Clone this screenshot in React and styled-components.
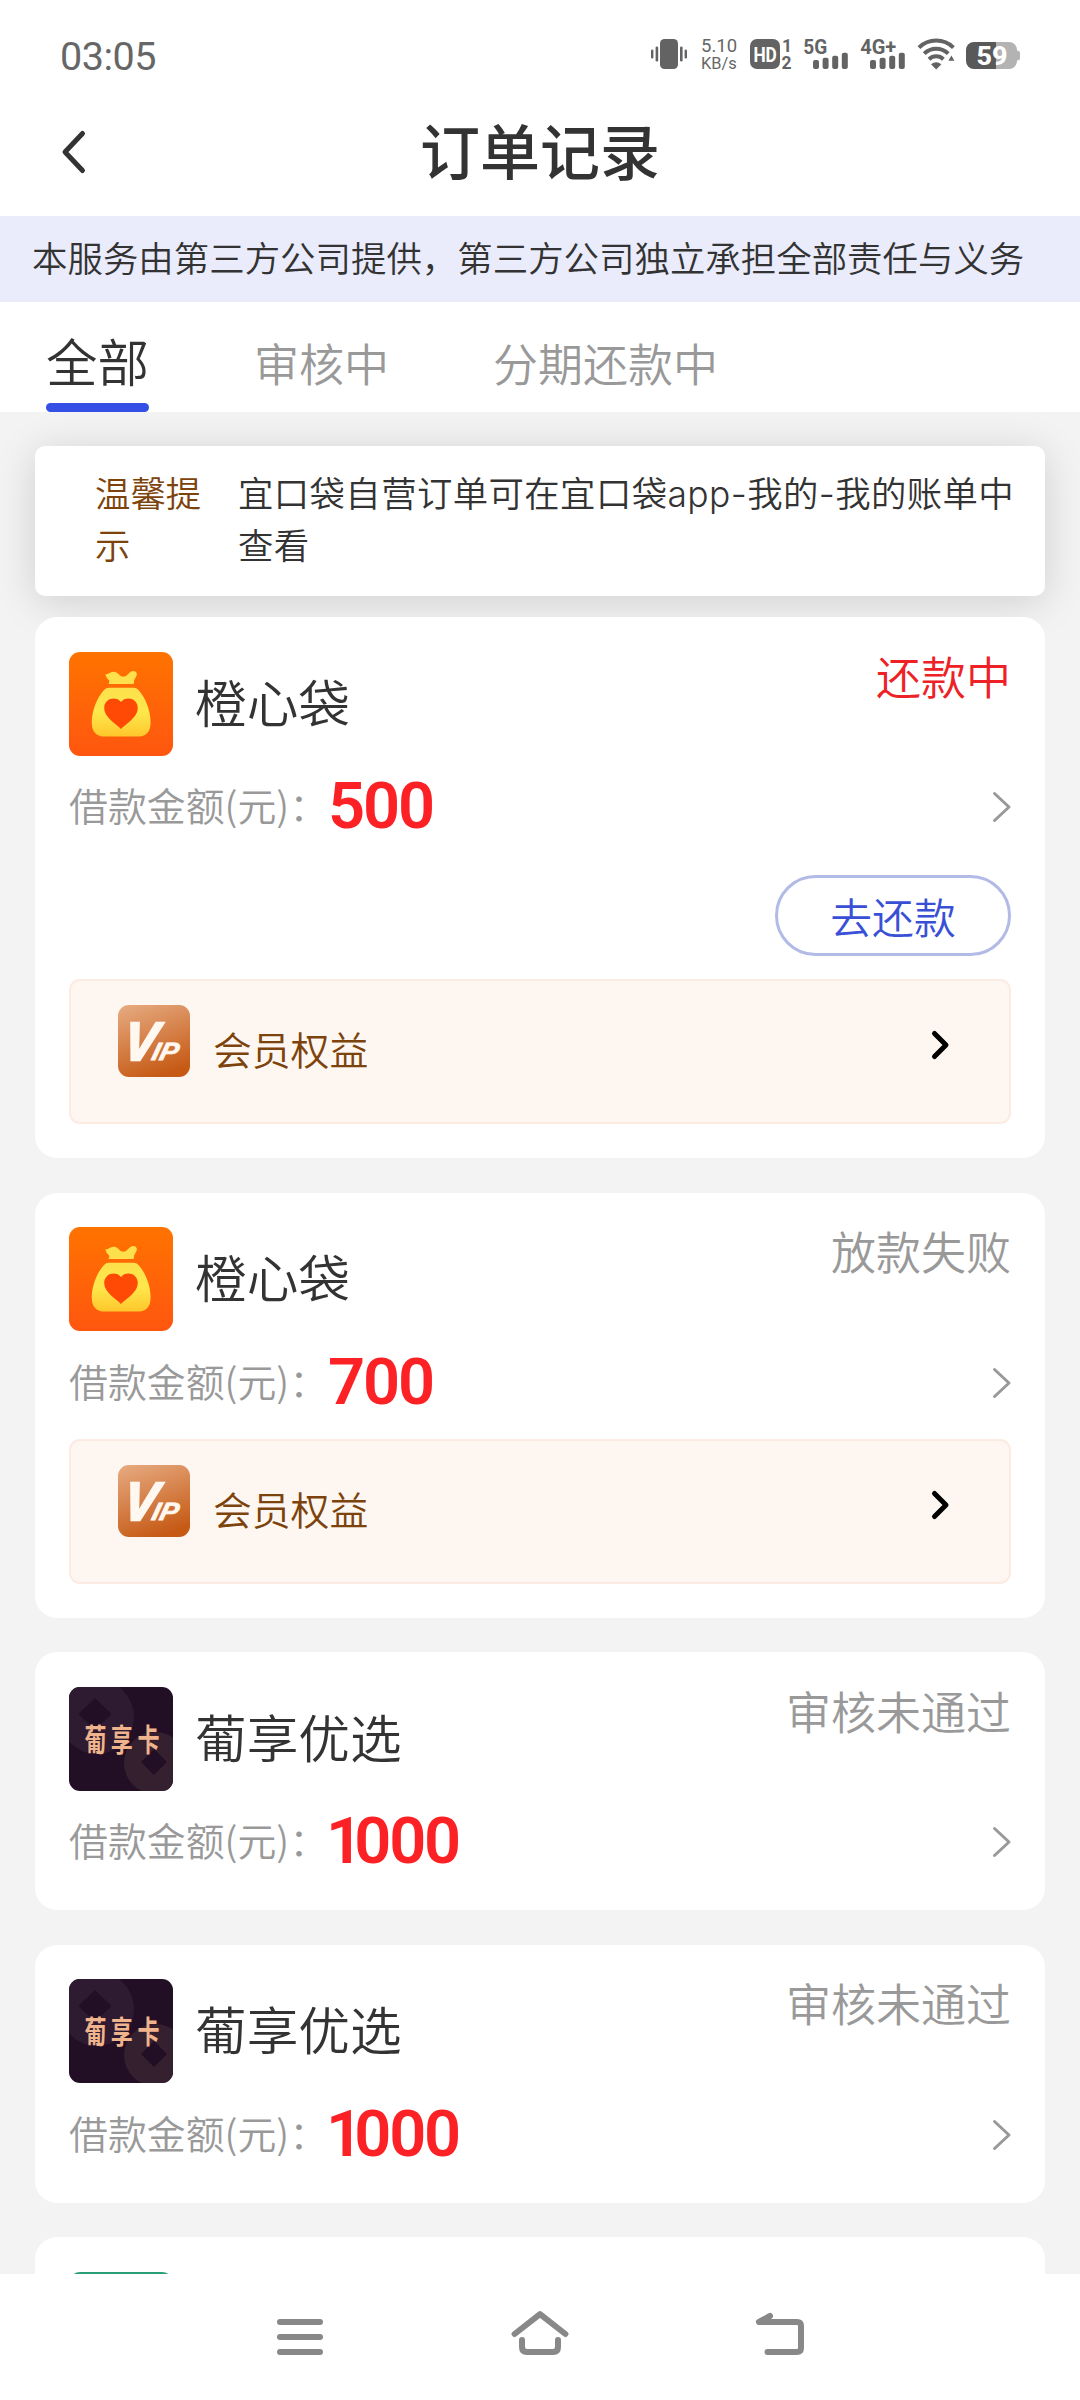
import React from "react";
import styled, { createGlobalStyle } from "styled-components";

const GlobalStyle = createGlobalStyle`
  body {
    margin: 0;
    background: #fff;
  }
  * {
    box-sizing: border-box;
  }
  svg {
    display: block;
    overflow: visible;
    flex: none;
  }
`;

const Screen = styled.div`
  width: 1080px;
  height: 2400px;
  display: flex;
  flex-direction: column;
  overflow: hidden;
  background: #fff;
  color: #333;
  font-family: "Noto Sans CJK SC", "Noto Sans", sans-serif;
  font-weight: 350;
`;

const StatusBar = styled.div`
  height: 88px;
  flex: none;
  display: flex;
  align-items: flex-start;
  justify-content: space-between;
  padding: 39px 60px 0 60px;
`;

const Clock = styled.div`
  font-family: Roboto, sans-serif;
  font-weight: 400;
  font-size: 39.5px;
  line-height: 36px;
  letter-spacing: -0.5px;
  color: #666;
`;

const StatusIcons = styled.div`
  display: flex;
  gap: 12px;
`;

const NetSpeed = styled.div`
  width: 37px;
  display: flex;
  flex-direction: column;
  font-family: Roboto, sans-serif;
  font-weight: 400;
  color: #666;
  white-space: nowrap;
`;

const SpeedValue = styled.span`
  font-size: ${(p) => p.$size}px;
  line-height: ${(p) => p.$line}px;
`;

const Header = styled.header`
  height: 128px;
  flex: none;
  display: grid;
  grid-template-columns: 120px 1fr 120px;
  align-items: center;
`;

const BackButton = styled.div`
  padding-left: 62px;
`;

const Title = styled.h1`
  margin: 0;
  text-align: center;
  font-size: 60px;
  line-height: 80px;
  padding-bottom: 7px;
  font-weight: 500;
`;

const Notice = styled.div`
  height: 86px;
  flex: none;
  padding-left: 32px;
  background: #eaecfb;
  font-size: 35.45px;
  line-height: 82px;
  white-space: nowrap;
`;

const Tabs = styled.nav`
  height: 110px;
  flex: none;
  display: flex;
  padding-left: 46px;
`;

const Tab = styled.div`
  display: flex;
  flex-direction: column;
  justify-content: space-between;
  margin-right: ${(p) => p.$after}px;
  font-size: ${(p) => (p.$active ? 51.5 : 45)}px;
  line-height: 101px;
  padding-top: ${(p) => (p.$active ? 7 : 10)}px;
  height: 110px;
  color: ${(p) => (p.$active ? "#333" : "#999")};
`;

const TabLabel = styled.span`
  height: 94px;
`;

const TabMarker = styled.span`
  height: 9px;
  border-radius: 4.5px;
  background: #344fe6;
`;

const Content = styled.main`
  flex: 1;
  min-height: 0;
  overflow: hidden;
  background: #f3f3f3;
  padding: 34px 35px 0;
`;

const TipCard = styled.section`
  height: 150px;
  display: flex;
  padding: 20px 20px 0 60px;
  margin-bottom: 21px;
  border-radius: 10px;
  background: #fff;
  box-shadow: 0 6px 42px rgba(0, 0, 0, 0.15);
  font-size: 35.4px;
  line-height: 52px;
`;

const TipLabel = styled.div`
  width: 143px;
  padding-right: 34px;
  flex: none;
  color: #7d430c;
`;

const TipText = styled.div`
  flex: 1;
  padding-top: 3px;
  font-family: Inter, "Noto Sans CJK SC", sans-serif;
  letter-spacing: 0.4px;
`;

const Card = styled.section`
  background: #fff;
  border-radius: 22px;
  padding: 34.6px 34px 34px 34px;
  margin-bottom: 34.6px;
`;

const CardHead = styled.div`
  height: 104px;
  display: flex;
`;

const AppName = styled.div`
  flex: 1;
  padding-left: 22px;
  font-size: 51.7px;
  line-height: 97.5px;
`;

const Status = styled.div`
  font-size: 45px;
  line-height: 48px;
  color: ${(p) => (p.$active ? "#ee2226" : "#999")};
`;

const AmountRow = styled.div`
  height: 68px;
  margin-top: 17.4px;
  display: flex;
  align-items: center;
`;

const AmountLabel = styled.span`
  font-size: 38.9px;
  line-height: 62px;
  padding-bottom: 6px;
  color: #999;
`;

const Amount = styled.span`
  flex: 1;
  font-family: Roboto, sans-serif;
  font-weight: 600;
  font-size: 65px;
  line-height: 66px;
  padding-bottom: 2px;
  letter-spacing: -2.2px;
  color: #fc2125;

  &::first-letter {
    margin-left: ${(p) => (p.$narrow ? -2 : 0)}px;
    letter-spacing: ${(p) => (p.$narrow ? -9 : -2.2)}px;
  }
`;

const Actions = styled.div`
  display: flex;
  justify-content: flex-end;
  margin-top: 34px;
`;

const RepayButton = styled.button`
  width: 236px;
  height: 81px;
  padding: 1px 0 0;
  border: 3px solid #b2bae6;
  border-radius: 41px;
  background: #fff;
  font: inherit;
  font-size: 41.8px;
  line-height: 74px;
  color: #3950d6;
`;

const VipRow = styled.div`
  height: 145px;
  margin-top: ${(p) => p.$top}px;
  display: flex;
  padding: 24px 60px 0 47px;
  border: 2px solid #fbebe3;
  border-radius: 11px;
  background: #fef7f1;
`;

const VipLabel = styled.span`
  flex: 1;
  padding-left: 23px;
  font-size: 38.8px;
  line-height: 86px;
  color: #7d430c;
`;

const VipArrow = styled.span`
  padding-top: 26px;
`;

const TealLogo = styled.div`
  width: 104px;
  height: 104px;
  border-radius: 11px;
  background: #2a9f75;
`;

const NavBar = styled.footer`
  height: 126px;
  flex: none;
  display: flex;
  justify-content: center;
  gap: 180px;
  padding-top: 36px;
  background: #fff;
`;

const G = "#636363";

function VibrateIcon() {
  return (
    <svg width="38" height="30" viewBox="0 0 38 30" fill={G}>
      <rect x="9" y="0" width="18" height="30" rx="4.5" />
      <rect x="4.6" y="7.5" width="2.6" height="15" rx="1.3" />
      <rect x="0" y="10.5" width="2.4" height="9" rx="1.2" />
      <rect x="29" y="7.5" width="2.6" height="15" rx="1.3" />
      <rect x="33.6" y="10.5" width="2.4" height="9" rx="1.2" />
    </svg>
  );
}

function HdIcon() {
  return (
    <svg width="42" height="30" viewBox="0 0 42 30" fontFamily="Roboto, sans-serif" fontWeight="700" fill={G}>
      <rect width="30" height="30" rx="7" />
      <text x="3.4" y="22.6" fontSize="21" fill="#fff" textLength="23.5" lengthAdjust="spacingAndGlyphs">
        HD
      </text>
      <text x="32" y="12.6" fontSize="17.5">1</text>
      <text x="31.5" y="29.6" fontSize="17.5">2</text>
    </svg>
  );
}

function SignalIcon({ label, width, offset }) {
  const tops = [21, 18.7, 16.7, 13.7];
  return (
    <svg width="45" height="30" viewBox="0 0 45 30" fill={G}>
      <text x="-0.8" y="14.6" fontFamily="Roboto, sans-serif" fontWeight="700" fontSize="20" textLength={width} lengthAdjust="spacingAndGlyphs">
        {label}
      </text>
      {tops.map((y, i) => (
        <rect key={y} x={offset + i * 9.6} y={y} width="6" height={30 - y} rx="2" />
      ))}
    </svg>
  );
}

function WifiIcon() {
  return (
    <svg width="36" height="30" viewBox="0 0 36 30">
      <g fill="none" stroke={G} strokeWidth="4">
        <path d="M1 8.6 A24.6 24.6 0 0 1 35.4 8.6" />
        <path d="M6.2 14.6 A17 17 0 0 1 30.2 14.6" />
        <path d="M11 20.2 A10.4 10.4 0 0 1 25.4 20.2" />
      </g>
      <path d="M13 25.2 Q18.2 21.4 23.4 25.2 L18.2 30.4 Z" fill={G} />
      <path d="M33.4 16.6 L36.4 21.8 H30.4 Z" fill={G} />
    </svg>
  );
}

function BatteryIcon() {
  return (
    <svg width="54" height="30" viewBox="0 0 54 30">
      <path d="M30 3 H43 A8 8 0 0 1 51 11 V11.5 Q54 12 54 14 V19 Q54 21 51 21.5 V22 A8 8 0 0 1 43 30 H30 Z" fill="#b3b3b3" />
      <path d="M30 3 H8 A8 8 0 0 0 0 11 V22 A8 8 0 0 0 8 30 H30 Z" fill="#595959" />
      <text x="10.5" y="26" fontFamily="Roboto, sans-serif" fontWeight="800" fontSize="26" fill="#fff" textLength="31" lengthAdjust="spacingAndGlyphs">
        59
      </text>
    </svg>
  );
}

function Chevron({ width, height, stroke, color, left, cap = "round" }) {
  const h = stroke / 2;
  const d = left
    ? `M${width - h} ${h} L${h + 0.5} ${height / 2} L${width - h} ${height - h}`
    : `M${h} ${h} L${width - h - 0.5} ${height / 2} L${h} ${height - h}`;
  return (
    <svg width={width} height={height} fill="none" stroke={color} strokeWidth={stroke} strokeLinecap={cap} strokeLinejoin="round">
      <path d={d} />
    </svg>
  );
}

function PouchLogo() {
  return (
    <svg width="104" height="104" viewBox="0 0 104 104">
      <defs>
        <linearGradient id="pouchBg" x1="0" y1="0" x2="0" y2="1">
          <stop offset="0" stopColor="#ff7300" />
          <stop offset="1" stopColor="#ff560f" />
        </linearGradient>
        <linearGradient id="pouchBody" x1="0" y1="0" x2="0" y2="1">
          <stop offset="0" stopColor="#fde04c" />
          <stop offset="0.5" stopColor="#fde84c" />
          <stop offset="1" stopColor="#ffc62b" />
        </linearGradient>
      </defs>
      <rect width="104" height="104" rx="11" fill="url(#pouchBg)" />
      <path d="M39.5 32 L40.5 29 Q37 25.5 36.2 22.4 Q39 22.6 41.5 20.6 Q45.5 18.6 48.6 21.2 Q51.6 24.8 54.4 24.8 Q57.6 24.4 60.2 21 Q63 18 66.4 19.6 Q68.8 21.5 67.2 24.4 Q65 27 64.6 32 Z" fill="#fde04c" />
      <path d="M40 35.8 H64.5 Q67.5 35.8 69.5 38 C76 45 81.6 58 81.6 70.5 C81.6 80 77 84.6 68.5 84.6 H36 C27.5 84.6 22.8 80 22.8 70.5 C22.8 58 28.5 45 35 38 Q37 35.8 40 35.8 Z" fill="url(#pouchBody)" />
      <path d="M52 77 C47.5 72 35.2 65.5 35.2 56.2 C35.2 45.8 47.5 44 52 50 C56.5 44 68.8 45.8 68.8 56.2 C68.8 65.5 56.5 72 52 77 Z" fill="#ff4a05" />
    </svg>
  );
}

function CardLogo() {
  const chars = [["葡", 26.4], ["享", 52.8], ["卡", 79.4]];
  return (
    <svg width="104" height="104" viewBox="0 0 104 104">
      <defs>
        <clipPath id="cardClip">
          <rect width="104" height="104" rx="11" />
        </clipPath>
      </defs>
      <g clipPath="url(#cardClip)">
        <rect width="104" height="104" fill="#220f26" />
        <circle cx="28" cy="30" r="37" fill="#2e1a31" />
        <circle cx="86" cy="76" r="31" fill="#35202f" />
        <path d="M26 11 L42.5 27 L26 43 L9.5 27 Z M85 62 L98 75 L85 88 L72 75 Z" fill="#220f26" />
      </g>
      <g fill="#f0b48c" fontFamily="'Noto Sans CJK SC', sans-serif" fontWeight="700" fontSize="22" textAnchor="middle">
        {chars.map(([c, x]) => (
          <text key={c} transform={`translate(${x} 63.5) scale(1 1.4)`}>
            {c}
          </text>
        ))}
      </g>
    </svg>
  );
}

function VipIcon() {
  return (
    <svg width="72" height="72" viewBox="0 0 72 72">
      <defs>
        <linearGradient id="vipBg" x1="0.2" y1="0" x2="0.55" y2="1">
          <stop offset="0" stopColor="#e5a77c" />
          <stop offset="0.5" stopColor="#d58048" />
          <stop offset="1" stopColor="#c65a15" />
        </linearGradient>
      </defs>
      <rect width="72" height="72" rx="11" fill="url(#vipBg)" />
      <g fill="#fff8f0" stroke="#fff8f0" fontFamily="'Liberation Sans', sans-serif" fontWeight="700" fontStyle="italic">
        <text transform="translate(4 54.5) skewX(-8)" fontSize="54" strokeWidth="2.4" textLength="33" lengthAdjust="spacingAndGlyphs">V</text>
        <text transform="translate(32.5 54.5) skewX(-14)" fontSize="25" strokeWidth="0.8" textLength="26" lengthAdjust="spacingAndGlyphs">IP</text>
      </g>
    </svg>
  );
}

function NavMenuIcon() {
  return (
    <svg width="60" height="54" viewBox="0 0 60 54" stroke="#888" strokeWidth="6" strokeLinecap="round">
      <path d="M10 12 H50 M10 27 H50 M10 42 H50" />
    </svg>
  );
}

function NavHomeIcon() {
  return (
    <svg width="60" height="54" viewBox="0 0 60 54" fill="none" stroke="#888" strokeWidth="6" strokeLinecap="round" strokeLinejoin="round">
      <path d="M4.6 24 L30 4.2 L55.4 24" />
      <path d="M12 30 V37 Q12 42 17 42 H43 Q48 42 48 37 V30" />
    </svg>
  );
}

function NavBackIcon() {
  return (
    <svg width="60" height="54" viewBox="0 0 60 54" fill="none" stroke="#888" strokeWidth="6" strokeLinecap="round" strokeLinejoin="round">
      <path d="M20 6 L9 12 H47 Q51 12 51 16 V38 Q51 42 47 42 H17.5" />
    </svg>
  );
}

function Order({ logo, name, status, active, amount, repay, vip }) {
  return (
    <Card>
      <CardHead>
        {logo}
        <AppName>{name}</AppName>
        <Status $active={active}>{status}</Status>
      </CardHead>
      <AmountRow>
        <AmountLabel>借款金额(元)：</AmountLabel>
        <Amount $narrow={amount.startsWith("1")}>{amount}</Amount>
        <Chevron width={18} height={30} stroke={3} color="#999" />
      </AmountRow>
      {repay && (
        <Actions>
          <RepayButton>去还款</RepayButton>
        </Actions>
      )}
      {vip && (
        <VipRow $top={repay ? 23 : 22}>
          <VipIcon />
          <VipLabel>会员权益</VipLabel>
          <VipArrow>
            <Chevron width={17} height={28} stroke={5} color="#000" />
          </VipArrow>
        </VipRow>
      )}
    </Card>
  );
}

export default function App() {
  return (
    <Screen>
      <GlobalStyle />
      <StatusBar>
        <Clock>03:05</Clock>
        <StatusIcons>
          <VibrateIcon />
          <NetSpeed>
            <SpeedValue $size={18.5} $line={15}>5.10</SpeedValue>
            <SpeedValue $size={16.4} $line={20}>KB/s</SpeedValue>
          </NetSpeed>
          <HdIcon />
          <SignalIcon label="5G" width={24} offset={9} />
          <SignalIcon label="4G+" width={36} offset={9} />
          <WifiIcon />
          <BatteryIcon />
        </StatusIcons>
      </StatusBar>
      <Header>
        <BackButton>
          <Chevron width={23} height={42} stroke={5} color="#333" left />
        </BackButton>
        <Title>订单记录</Title>
      </Header>
      <Notice>本服务由第三方公司提供，第三方公司独立承担全部责任与义务</Notice>
      <Tabs>
        <Tab $active $after={105}>
          <TabLabel>全部</TabLabel>
          <TabMarker />
        </Tab>
        <Tab $after={104}>
          <TabLabel>审核中</TabLabel>
        </Tab>
        <Tab $after={0}>
          <TabLabel>分期还款中</TabLabel>
        </Tab>
      </Tabs>
      <Content>
        <TipCard>
          <TipLabel>温馨提示</TipLabel>
          <TipText>宜口袋自营订单可在宜口袋app-我的-我的账单中查看</TipText>
        </TipCard>
        <Order logo={<PouchLogo />} name="橙心袋" status="还款中" active amount="500" repay vip />
        <Order logo={<PouchLogo />} name="橙心袋" status="放款失败" amount="700" vip />
        <Order logo={<CardLogo />} name="葡享优选" status="审核未通过" amount="1000" />
        <Order logo={<CardLogo />} name="葡享优选" status="审核未通过" amount="1000" />
        <Card>
          <TealLogo />
        </Card>
      </Content>
      <NavBar>
        <NavMenuIcon />
        <NavHomeIcon />
        <NavBackIcon />
      </NavBar>
    </Screen>
  );
}
